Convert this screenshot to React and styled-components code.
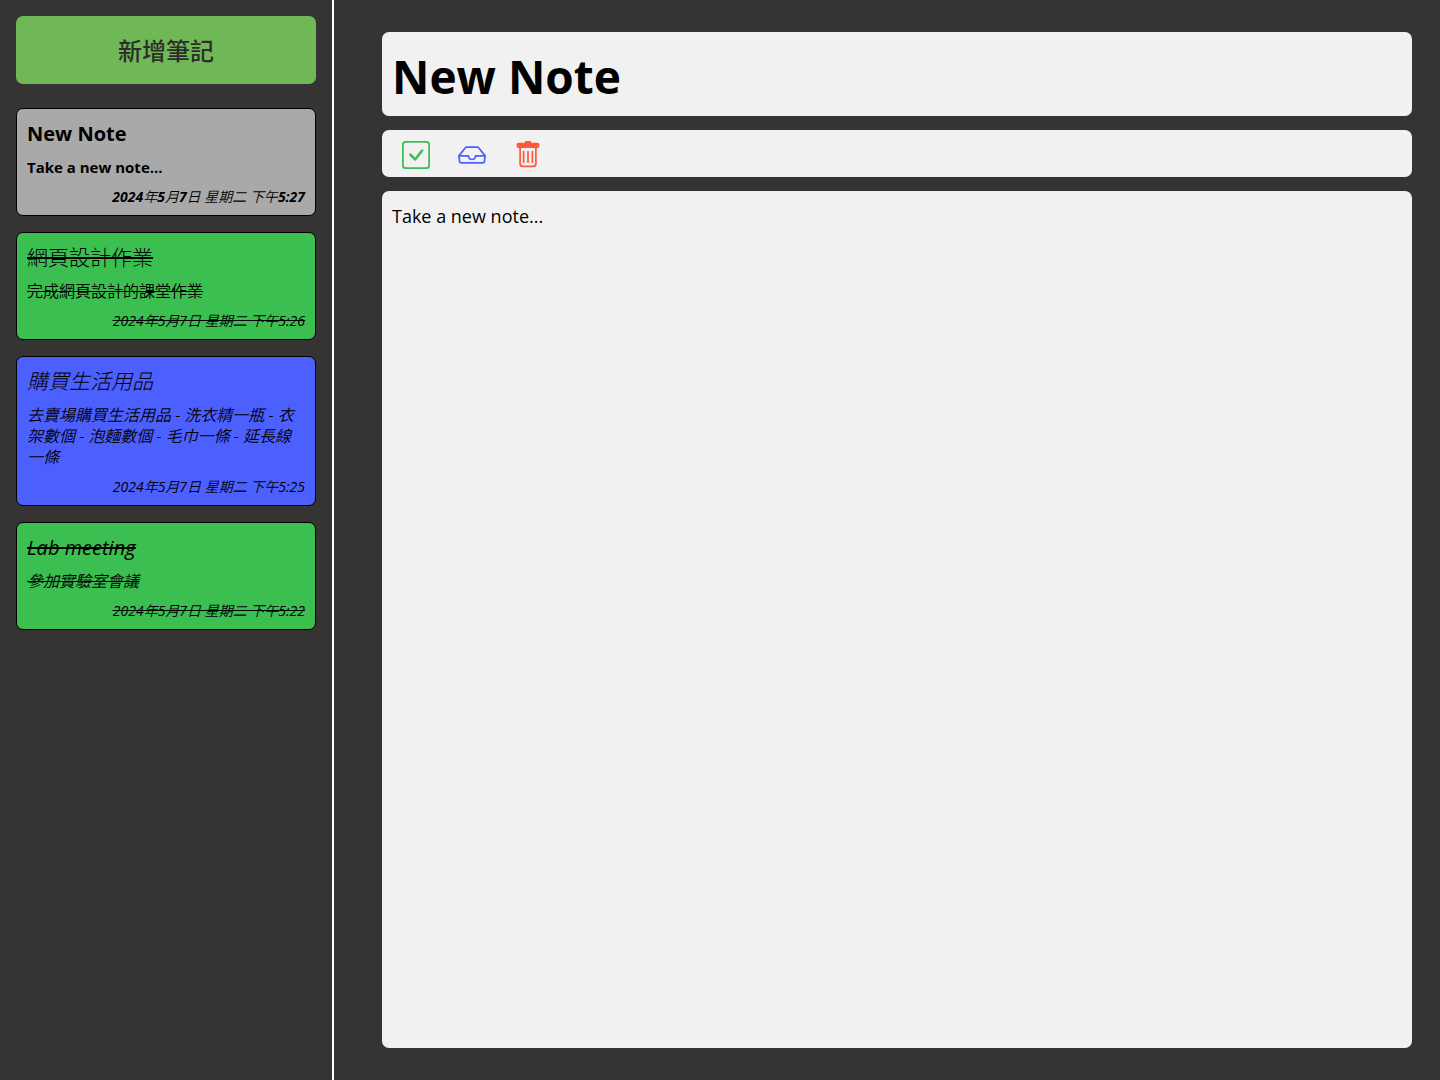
import React, { useState } from "react";
import styled, { createGlobalStyle } from "styled-components";
import { BsCheckSquare, BsInbox } from "react-icons/bs";

const GlobalStyle = createGlobalStyle`
  *, *::before, *::after { box-sizing: border-box; }
  body {
    margin: 0;
    background: #353432;
    color: #000;
    font-family: "Open Sans", "Noto Sans CJK TC", sans-serif;
  }
  h2, p { margin: 0; }
`;

const Page = styled.div`
  display: flex;
  min-height: 100vh;
`;

const Sidebar = styled.aside`
  flex: 0 0 334px;
  padding: 16px;
  border-right: 2px solid #fff;
`;

const AddButton = styled.button`
  width: 100%;
  padding: 16px;
  margin-bottom: 24px;
  border: 0;
  border-radius: 7px;
  background: #70b855;
  color: #2d2d2d;
  font-family: "Noto Sans CJK TC", sans-serif;
  font-size: 24px;
  font-weight: 500;
  line-height: 36px;
  cursor: pointer;
`;

const NoteList = styled.div`
  display: flex;
  flex-direction: column;
  gap: 16px;
`;

const tones = { selected: "#a9a9a9", done: "#3abf50", archived: "#4c5fff" };

const Card = styled.article`
  display: flex;
  flex-direction: column;
  gap: 10px;
  padding: 11px 10px 9px;
  border: 1px solid #000;
  border-radius: 7px;
  background: ${(p) => tones[p.$tone]};
  font-weight: ${(p) => (p.$tone === "selected" ? 700 : 400)};
  font-style: ${(p) => (p.$italic ? "italic" : "normal")};
  text-decoration: ${(p) => (p.$tone === "done" ? "line-through" : "none")};
  cursor: pointer;
`;

const CardTitle = styled.h2`
  font-size: ${(p) => (p.$latin ? 20 : 21)}px;
  font-weight: ${(p) => (p.$latin ? "inherit" : 300)};
  line-height: 27px;
  text-decoration: inherit;
`;

const CardText = styled.p`
  font-size: ${(p) => (p.$latin ? 15 : 16)}px;
  font-weight: ${(p) => (p.$latin ? "inherit" : 350)};
  line-height: 21px;
  text-decoration: inherit;
`;

const CardDate = styled.time`
  align-self: flex-end;
  font-size: 14px;
  font-style: italic;
  line-height: 18px;
  text-decoration: inherit;
`;

const Han = styled.span`
  font-weight: 350;
`;

const Editor = styled.main`
  flex: 1;
  min-width: 0;
  display: flex;
  flex-direction: column;
  gap: 14px;
  padding: 32px 28px 32px 48px;
`;

const TitleInput = styled.input`
  width: 100%;
  padding: 12px 10px 8px;
  border: 0;
  border-radius: 7px;
  outline: 0;
  background: #f1f1f1;
  color: #000;
  font-family: inherit;
  font-size: 46px;
  font-weight: 700;
  line-height: 64px;
  height: 84px;
`;

const Toolbar = styled.div`
  display: flex;
  gap: 28px;
  padding: 11px 20px 8px;
  border-radius: 7px;
  background: #f1f1f1;
`;

const ToolButton = styled.button`
  display: flex;
  padding: 0;
  border: 0;
  background: none;
  color: ${(p) => p.$color};
  font-size: 28px;
  cursor: pointer;
`;

const BodyInput = styled.textarea`
  flex: 1;
  width: 100%;
  padding: 12px 10px;
  border: 0;
  border-radius: 7px;
  outline: 0;
  resize: none;
  background: #f1f1f1;
  color: #000;
  font-family: inherit;
  font-size: 18px;
  font-weight: 400;
  line-height: 26px;
`;

const notes = [
  { title: "New Note", text: "Take a new note...", date: "2024年5月7日 星期二 下午5:27", tone: "selected" },
  { title: "網頁設計作業", text: "完成網頁設計的課堂作業", date: "2024年5月7日 星期二 下午5:26", tone: "done" },
  {
    title: "購買生活用品",
    text: "去賣場購買生活用品 - 洗衣精一瓶 - 衣架數個 - 泡麵數個 - 毛巾一條 - 延長線一條",
    date: "2024年5月7日 星期二 下午5:25",
    tone: "archived",
    italic: true,
  },
  { title: "Lab meeting", text: "參加實驗室會議", date: "2024年5月7日 星期二 下午5:22", tone: "done", italic: true },
];

// Digits follow the card's weight; the characters between them stay light.
const splitHan = (text) =>
  text.split(/([\u4e00-\u9fff]+)/).map((part, i) => (i % 2 ? <Han key={i}>{part}</Han> : part));

const isLatin = (text) => /^[\x20-\x7e]+$/.test(text);

function TrashIcon() {
  return (
    <svg width="1em" height="1em" viewBox="0 0 16 16" fill="currentColor" aria-hidden="true">
      <path d="M5.5 5.5A.5.5 0 0 1 6 6v6a.5.5 0 0 1-1 0V6a.5.5 0 0 1 .5-.5m2.5 0a.5.5 0 0 1 .5.5v6a.5.5 0 0 1-1 0V6a.5.5 0 0 1 .5-.5m3 .5a.5.5 0 0 0-1 0v6a.5.5 0 0 0 1 0z" />
      <path d="M14.5 3a1 1 0 0 1-1 1H13v9a2 2 0 0 1-2 2H5a2 2 0 0 1-2-2V4h-.5a1 1 0 0 1-1-1V2a1 1 0 0 1 1-1H6a1 1 0 0 1 1-1h2a1 1 0 0 1 1 1h3.5a1 1 0 0 1 1 1zM4.118 4 4 4.059V13a1 1 0 0 0 1 1h6a1 1 0 0 0 1-1V4.059L11.882 4z" />
    </svg>
  );
}

export default function App() {
  const [title, setTitle] = useState("New Note");
  const [body, setBody] = useState("Take a new note...");
  return (
    <Page>
      <GlobalStyle />
      <Sidebar>
        <AddButton type="button">新增筆記</AddButton>
        <NoteList>
          {notes.map((n) => (
            <Card key={n.date} $tone={n.tone} $italic={n.italic}>
              <CardTitle $latin={isLatin(n.title)}>{n.title}</CardTitle>
              <CardText $latin={isLatin(n.text)}>{n.text}</CardText>
              <CardDate>{splitHan(n.date)}</CardDate>
            </Card>
          ))}
        </NoteList>
      </Sidebar>
      <Editor>
        <TitleInput aria-label="標題" value={title} onChange={(e) => setTitle(e.target.value)} />
        <Toolbar>
          <ToolButton type="button" aria-label="完成" $color="#3abf50"><BsCheckSquare /></ToolButton>
          <ToolButton type="button" aria-label="封存" $color="#4c5fff"><BsInbox /></ToolButton>
          <ToolButton type="button" aria-label="刪除" $color="#ff5a3c"><TrashIcon /></ToolButton>
        </Toolbar>
        <BodyInput aria-label="內容" value={body} onChange={(e) => setBody(e.target.value)} />
      </Editor>
    </Page>
  );
}
